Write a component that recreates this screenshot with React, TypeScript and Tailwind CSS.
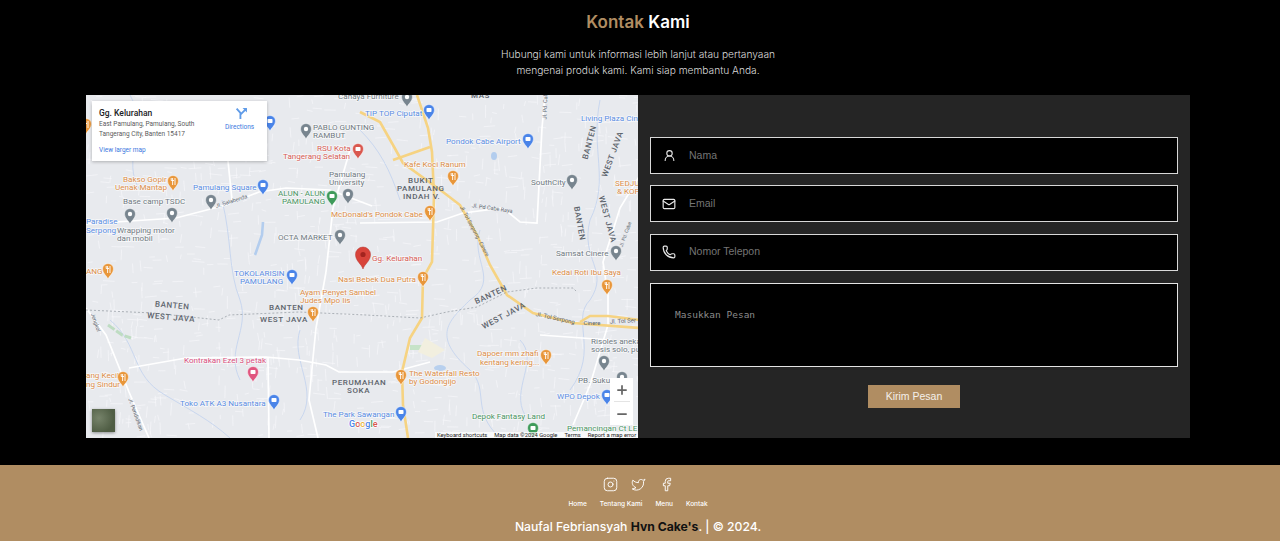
import React from "react";
import { Facebook, Instagram, Mail, Minus, Phone, Plus, Twitter, UserRound } from "lucide-react";

type Kind = "grey" | "orange" | "blue" | "green" | "red" | "pink";

const pinColors: Record<Kind, string> = {
  grey: "#78858f",
  orange: "#e8963a",
  blue: "#4a84e8",
  green: "#3f9a5a",
  red: "#d9584f",
  pink: "#e0567f",
};

const textColors: Record<Kind, string> = {
  grey: "#6f7881",
  orange: "#dc8d48",
  blue: "#5a8ce2",
  green: "#4a9462",
  red: "#d65c55",
  pink: "#d9507f",
};

const labels: [string, number, number, Kind][] = [
  ["Bakso Gopir", 123, 182, "orange"],
  ["Uenak Mantap", 115, 190, "orange"],
  ["Pamulang Square", 193, 190, "blue"],
  ["Base camp TSDC", 123, 204, "grey"],
  ["Paradise", 86, 224, "blue"],
  ["Serpong", 86, 233, "blue"],
  ["Wrapping motor", 117, 233, "grey"],
  ["dan mobil", 117, 241, "grey"],
  ["PABLO GUNTING", 313, 130, "grey"],
  ["RAMBUT", 313, 138, "grey"],
  ["RSU Kota", 317, 151, "red"],
  ["Tangerang Selatan", 283, 159, "red"],
  ["Pamulang", 329, 177, "grey"],
  ["University", 329, 185, "grey"],
  ["ALUN - ALUN", 278, 196, "green"],
  ["PAMULANG", 282, 204, "green"],
  ["McDonald's Pondok Cabe", 331, 217, "orange"],
  ["OCTA MARKET", 278, 240, "grey"],
  ["Cahaya Furniture", 338, 99, "grey"],
  ["TIP TOP Ciputat", 365, 116, "blue"],
  ["Pondok Cabe Airport", 446, 144, "blue"],
  ["Living Plaza Cinere", 581, 121, "blue"],
  ["Kafe Koci Ranum", 404, 167, "orange"],
  ["SouthCity", 531, 185, "grey"],
  ["SEDJU", 615, 186, "orange"],
  ["& KOP", 617, 194, "orange"],
  ["Samsat Cinere", 556, 256, "grey"],
  ["Gg. Kelurahan", 372, 261, "red"],
  ["Nasi Bebek Dua Putra", 338, 282, "orange"],
  ["Ayam Penyet Sambel", 300, 295, "orange"],
  ["Judes Mpo Iis", 300, 303, "orange"],
  ["Kedai Roti Ibu Saya", 552, 275, "orange"],
  ["Risoles aneka", 591, 344, "grey"],
  ["sosis solo, pu", 591, 352, "grey"],
  ["PB. Suku", 578, 383, "grey"],
  ["WPO Depok", 557, 399, "blue"],
  ["Dapoer mm zhafi", 477, 356, "orange"],
  ["kentang kering...", 480, 365, "orange"],
  ["The Waterfall Resto", 409, 376, "orange"],
  ["by Godongijo", 409, 384, "orange"],
  ["Depok Fantasy Land", 472, 419, "green"],
  ["Pemancingan Ct LE", 567, 431, "green"],
  ["TOKOLARISIN", 234, 276, "blue"],
  ["PAMULANG", 240, 284, "blue"],
  ["Kontrakan Ezel 3 petak", 184, 363, "pink"],
  ["Toko ATK A3 Nusantara", 180, 406, "blue"],
  ["ang Kecil", 86, 378, "orange"],
  ["ng Sindur", 86, 387, "orange"],
  ["The Park Sawangan", 323, 417, "blue"],
  ["ANG", 86, 274, "orange"],
];

const areaLabels: [string, number, number][] = [
  ["MAS", 471, 98],
  ["BUKIT", 408, 183],
  ["PAMULANG", 397, 191],
  ["INDAH V.", 403, 199],
  ["PERUMAHAN", 332, 385],
  ["SOKA", 347, 393],
  ["BANTEN", 269, 310],
  ["WEST JAVA", 260, 322],
];

const rotated: [string, number, number, number, number, boolean][] = [
  ["BANTEN", 592, 143, -75, 8, true],
  ["WEST JAVA", 615, 155, -70, 8, true],
  ["BANTEN", 577, 224, 80, 8, true],
  ["WEST JAVA", 605, 220, 75, 8, true],
  ["BANTEN", 492, 297, -25, 8, true],
  ["WEST JAVA", 505, 318, -28, 8, true],
  ["BANTEN", 172, 308, 5, 8, true],
  ["WEST JAVA", 171, 320, 5, 8, true],
  ["Jl. Pd. Cabe", 547, 105, -88, 5.5, false],
  ["Jl. Pd Cabe Raya", 492, 210, 8, 5.5, false],
  ["Jl. Tol Serpong - Cinere", 473, 232, 62, 5.5, false],
  ["Jl. Tol Serpong", 555, 320, 12, 6, false],
  ["Cinere", 592, 325, 0, 6, false],
  ["Jl. Tol Ser", 623, 323, -3, 6, false],
  ["Jl. Salabenda", 232, 203, -18, 5.5, false],
  ["Jl. Pendidikan", 134, 415, 70, 5.5, false],
  ["Jengkol", 94, 323, 70, 5.5, false],
  ["Jl. Pd. Cabe", 627, 235, -70, 5, false],
];

const pins: [number, number, Kind][] = [
  [86, 125, "orange"],
  [270, 122, "blue"],
  [306, 130, "grey"],
  [358, 150, "red"],
  [173, 182, "orange"],
  [263, 186, "blue"],
  [130, 215, "grey"],
  [172, 214, "grey"],
  [211, 201, "grey"],
  [332, 197, "green"],
  [348, 195, "grey"],
  [430, 212, "orange"],
  [340, 236, "grey"],
  [407, 98, "grey"],
  [429, 111, "blue"],
  [528, 140, "blue"],
  [453, 177, "orange"],
  [572, 181, "grey"],
  [616, 252, "grey"],
  [423, 278, "orange"],
  [313, 313, "orange"],
  [607, 286, "orange"],
  [604, 362, "grey"],
  [622, 378, "grey"],
  [607, 396, "blue"],
  [546, 356, "orange"],
  [401, 376, "orange"],
  [533, 429, "green"],
  [401, 413, "blue"],
  [108, 270, "orange"],
  [292, 276, "blue"],
  [253, 373, "pink"],
  [274, 401, "blue"],
  [123, 378, "orange"],
];

const whiteRoads = [
  "M86 224 L176 218 L226 205 L259 192 L286 188 L330 190 L372 206",
  "M360 223 L437 222 L463 213 L503 208 L520 222 L537 223 L542 128 L545 95",
  "M640 175 L620 208 L603 262 L608 295 L608 325 L590 385 L573 425",
  "M86 308 L106 335 L129 392 L149 438",
  "M129 368 L186 358 L266 357 L299 360 L326 365 L339 372 L366 372 L393 372 L430 362",
  "M268 358 L269 438",
  "M326 272 L316 328 L313 358 L309 400 L318 438",
  "M333 208 L326 272",
  "M350 150 L333 208",
  "M228 161 L232 200",
  "M540 335 L610 340",
];

const yellowRoads = [
  "M417 95 L428 128 L432 152 L434 195 L432 262 L423 278 L422 318 L410 338 L402 372 L403 405 L408 438",
  "M360 112 L380 122 L393 145 L403 163 L443 192 L460 205 L477 235 L490 265 L507 295 L533 313 L573 323 L640 328",
  "M393 160 L430 147",
  "M580 322 L590 316 L608 316 L640 320",
];

const rivers = [
  "M222 200 C232 240 228 270 240 300 C250 330 225 350 240 380",
  "M110 320 C140 345 130 375 165 395 C190 410 210 420 230 438",
  "M480 230 C470 260 500 280 470 300 C450 320 430 335 470 370 C490 390 470 410 500 438",
  "M600 100 C590 150 610 180 590 220 C580 260 610 270 590 300 C570 320 600 350 570 390",
  "M300 330 C290 360 320 390 300 420",
  "M520 340 C540 360 510 390 525 415",
  "M130 95 C150 130 120 160 140 190",
  "M360 130 C380 150 390 170 400 200",
];

// street texture, same numbers on every load
const streets: string[] = [];
let seed = 17;
const next = () => {
  seed = (seed * 16807) % 2147483647;
  return seed / 2147483647;
};
for (let i = 0; i < 1100; i++) {
  const x = 86 + next() * 552;
  const y = 95 + next() * 343;
  const len = 4 + next() * 9;
  const flat = next() > 0.5;
  const skew = next() * 3 - 1.5;
  streets.push(flat ? `M${x} ${y} l${len} ${skew}` : `M${x} ${y} l${skew} ${len}`);
}

const Pin = ({ x, y, kind }: { x: number; y: number; kind: Kind }) => (
  <g transform={`translate(${x} ${y})`}>
    <path
      d="M0 9 C-1 6 -5.5 3.5 -5.5 -1 A5.5 5.5 0 1 1 5.5 -1 C5.5 3.5 1 6 0 9Z"
      fill={pinColors[kind]}
      stroke="#ffffff"
      strokeWidth="0.5"
    />
    {kind === "orange" ? (
      <path d="M-1.8 -4 V-1.5 H1 M-0.4 -4 V3 M2 -4 V3" stroke="#fff" strokeWidth="0.9" fill="none" />
    ) : kind === "grey" ? (
      <circle cx="0" cy="-1" r="2.2" fill="#fff" />
    ) : (
      <rect x="-2.5" y="-3" width="5" height="4" rx="0.8" fill="#fff" />
    )}
  </g>
);

const MapDrawing = () => (
  <svg viewBox="86 95 552 343" className="block h-full w-full font-['Roboto',sans-serif]">
    <rect x="86" y="95" width="552" height="343" fill="#e8eaee" />
    <path d={streets.join(" ")} stroke="#f8f9fb" strokeWidth="0.6" fill="none" />
    {rivers.map((d) => (
      <path key={d} d={d} stroke="#c9d7ee" strokeWidth="1" fill="none" />
    ))}
    <path d="M263 222 L262 235 L255 255" stroke="#b3cdee" strokeWidth="2.6" fill="none" />
    <ellipse cx="494" cy="156" rx="3" ry="4" fill="#b3cdee" />
    <ellipse cx="440" cy="368" rx="6" ry="3" fill="#b8d0ee" />
    <path d="M108 325 L122 335 L131 338" stroke="#bedcc2" strokeWidth="3" strokeDasharray="8 2" fill="none" />
    <rect x="410" y="345" width="12" height="5" fill="#c6e3c8" />
    <path d="M425 338 L445 350 L432 358 L418 352Z" fill="#f2efdf" />
    {whiteRoads.map((d) => (
      <path key={d} d={d} stroke="#ffffff" strokeWidth="1.7" fill="none" />
    ))}
    {yellowRoads.map((d) => (
      <path key={d} d={d} stroke="#f6d382" strokeWidth="2.6" fill="none" />
    ))}
    <path
      d="M86 310 L153 313 L219 320 L229 315 L299 312 L366 315 L420 318 L447 312 L477 307 L507 292 L537 288 L573 288 L577 292"
      stroke="#8f969e"
      strokeWidth="0.7"
      strokeDasharray="2 2"
      fill="none"
    />
    {labels.map(([t, x, y, kind]) => (
      <text
        key={`${t}${x}`}
        x={x}
        y={y}
        fontSize="8.1"
        fill={textColors[kind]}
        stroke="#ffffff"
        strokeWidth="1.5"
        strokeOpacity="0.7"
        paintOrder="stroke"
      >
        {t}
      </text>
    ))}
    {areaLabels.map(([t, x, y]) => (
      <text key={`${t}${x}`} x={x} y={y} fontSize="8" fontWeight="500" letterSpacing="0.6" fill="#5d646c">
        {t}
      </text>
    ))}
    {rotated.map(([t, x, y, deg, size, bold]) => (
      <text
        key={`${t}${x}`}
        x={0}
        y={0}
        transform={`translate(${x} ${y}) rotate(${deg})`}
        textAnchor="middle"
        fontSize={size}
        fontWeight={bold ? 500 : 400}
        letterSpacing={bold ? 0.6 : 0}
        fill={bold ? "#5d646c" : "#5d6770"}
      >
        {t}
      </text>
    ))}
    {pins.map(([x, y, kind]) => (
      <Pin key={`${x}${y}`} x={x} y={y} kind={kind} />
    ))}
    <g transform="translate(363 256)">
      <path
        d="M0 13 C-1.5 8 -7.5 5 -7.5 -1.5 A7.5 7.5 0 1 1 7.5 -1.5 C7.5 5 1.5 8 0 13Z"
        fill="#d8433a"
        stroke="#b5322c"
        strokeWidth="0.5"
      />
      <circle cx="0" cy="-1.5" r="2.6" fill="#a3241f" />
    </g>
    <text x="349" y="427" fontSize="9" fontWeight="500" stroke="#fff" strokeWidth="1.5" paintOrder="stroke">
      <tspan fill="#4a84e8">G</tspan>
      <tspan fill="#d9584f">o</tspan>
      <tspan fill="#e8b53a">o</tspan>
      <tspan fill="#4a84e8">g</tspan>
      <tspan fill="#3f9a5a">l</tspan>
      <tspan fill="#d9584f">e</tspan>
    </text>
  </svg>
);

const Field = ({ icon, label }: { icon: React.ReactNode; label: string }) => (
  <div className="flex h-[37px] items-center border border-[#d8d8d8] bg-black pl-[11px]">
    <span className="flex w-[14px] justify-center text-[#e8e8e8]">{icon}</span>
    <span className="ml-[13px] text-[10.5px] text-[#757575]">{label}</span>
  </div>
);

export default function App() {
  return (
    <div className="h-[541px] overflow-hidden bg-black font-['Liberation_Sans',sans-serif]">
      <header className="flex h-[95px] w-[1276px] flex-col items-center pt-[11px] font-['Inter',sans-serif]">
        <h2 className="text-[17px] leading-[22px] font-semibold text-white">
          <span className="text-[#b08d62]">Kontak</span> Kami
        </h2>
        <p className="mt-[13px] text-center text-[10.2px] leading-[16px] font-light text-[#dcdcdc]">
          Hubungi kami untuk informasi lebih lanjut atau pertanyaan
          <br />
          mengenai produk kami. Kami siap membantu Anda.
        </p>
      </header>

      <section className="ml-[86px] flex h-[343px] w-[1104px]">
        <div className="relative w-[552px] shrink-0">
          <MapDrawing />
          <div className="absolute top-[6px] left-[6px] h-[60px] w-[175px] bg-white font-['Roboto',sans-serif] shadow-[0_1px_3px_rgba(0,0,0,0.25)]">
            <div className="absolute top-[6px] left-[7px] text-[8.5px] leading-[12px] font-medium text-[#202124]">
              Gg. Kelurahan
            </div>
            <div className="absolute top-[19px] left-[7px] w-[115px] text-[6.5px] leading-[9.5px] text-[#5b5b5b]">
              East Pamulang, Pamulang, South Tangerang City, Banten 15417
            </div>
            <div className="absolute top-[45px] left-[7px] text-[6.5px] leading-[9px] text-[#3b78e0]">
              View larger map
            </div>
            <svg viewBox="0 0 24 24" className="absolute top-[6px] left-[143px] h-[13px] w-[13px]" fill="none">
              <path d="M3 3 L10 11 V22 M21 3 L10 14" stroke="#5f9be8" strokeWidth="3.4" />
              <path d="M14 2 H22 V10Z" fill="#5f9be8" />
            </svg>
            <div className="absolute top-[22px] left-[133px] text-[6.5px] leading-[9px] text-[#3b78e0]">
              Directions
            </div>
          </div>
          <div className="absolute top-[314px] left-[6px] h-[23px] w-[23px] bg-[#5c6a4c] bg-[radial-gradient(circle_at_30%_40%,#76836a_0,#4f5d44_70%)] shadow-[0_1px_3px_rgba(0,0,0,0.4)]" />
          <div className="absolute top-[283px] left-[524px] flex h-[47px] w-[23px] flex-col items-center bg-white text-[#666666]">
            <span className="flex h-[23px] items-center">
              <Plus size={14} strokeWidth={3} />
            </span>
            <span className="h-px w-[16px] bg-[#e4e4e4]" />
            <span className="flex h-[23px] items-center">
              <Minus size={14} strokeWidth={3} />
            </span>
          </div>
          <div className="absolute right-0 bottom-0 flex h-[6px] w-[203px] items-center gap-[7px] bg-white/70 pl-[2px] font-['Roboto',sans-serif] text-[5.8px] leading-[6px] whitespace-nowrap text-[#222222]">
            <span>Keyboard shortcuts</span>
            <span>Map data ©2024 Google</span>
            <span>Terms</span>
            <span>Report a map error</span>
          </div>
        </div>

        <form className="flex flex-1 flex-col bg-[#252525] px-[12px] pt-[42px]">
          <div className="flex flex-col gap-[11.4px]">
            <Field icon={<UserRound size={13} />} label="Nama" />
            <Field icon={<Mail size={14} />} label="Email" />
            <Field icon={<Phone size={14} />} label="Nomor Telepon" />
          </div>
          <div className="mt-[12.2px] h-[84px] border border-[#e4e4e4] bg-black pt-[25px] pl-[24px] font-['DejaVu_Sans_Mono',monospace] text-[9.5px] leading-[12px] text-[#8a8a8a]">
            Masukkan Pesan
          </div>
          <button
            type="button"
            className="mx-auto mt-[18px] h-[23px] w-[92px] bg-[#b08d62] text-[10.5px] text-[#f4f0ea]"
          >
            Kirim Pesan
          </button>
        </form>
      </section>

      <footer className="mt-[27px] flex h-[76px] flex-col items-center bg-[#b08d62] pt-[12px] pr-[4px] font-['Inter',sans-serif] text-white">
        <div className="flex items-center gap-[13px]">
          <Instagram size={15} strokeWidth={1.5} />
          <Twitter size={15} strokeWidth={1.5} />
          <Facebook size={15} strokeWidth={1.5} />
        </div>
        <nav className="mt-[8px] flex gap-[13px] text-[6.5px] leading-[9px] font-medium">
          <span>Home</span>
          <span>Tentang Kami</span>
          <span>Menu</span>
          <span>Kontak</span>
        </nav>
        <p className="mt-[9px] text-[12.2px] leading-[18px] font-medium">
          Naufal Febriansyah <span className="font-bold text-[#111111]">Hvn Cake's</span>. | © 2024.
        </p>
      </footer>
    </div>
  );
}
